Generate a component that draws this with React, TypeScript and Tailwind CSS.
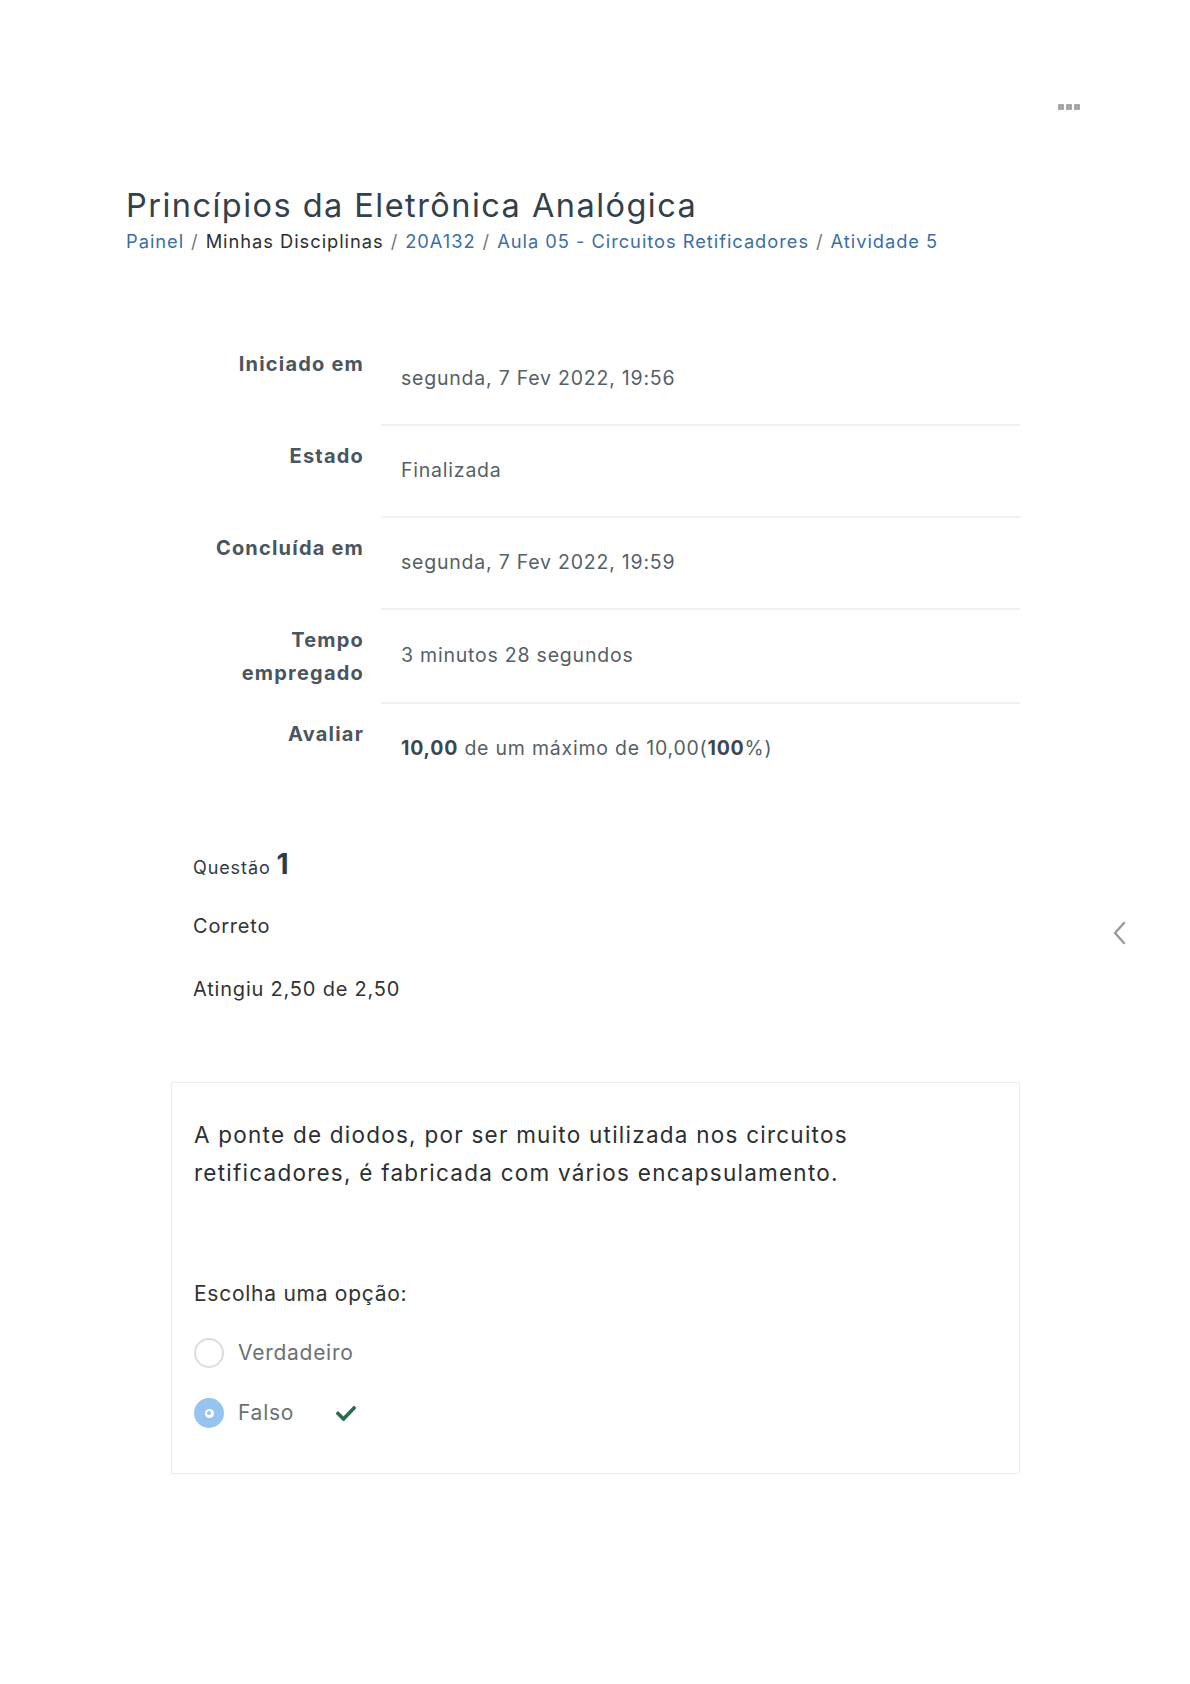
import React from "react";

const font = { fontFamily: "Inter, 'Noto Sans', sans-serif" };

function Row({ label, children, tall }: { label: React.ReactNode; children: React.ReactNode; tall?: boolean }) {
  return (
    <div className="flex">
      <div className={`w-[238px] shrink-0 pr-[17px] text-right text-[20px] font-bold tracking-[0.06em] leading-[33px] text-[#4a5560] ${tall ? "pt-[14px] pb-[12px]" : "pt-[14px]"}`}>
        {label}
      </div>
      <div className="flex-1 flex items-center min-h-[90px] pl-[20px] text-[19.5px] tracking-[0.04em] text-[#555f66]">{children}</div>
    </div>
  );
}

export default function App() {
  return (
    <div className="w-[1190px] min-h-[1684px] bg-white relative" style={font}>
      <div className="flex justify-end pt-[104px] pr-[110px]">
        <div className="flex gap-[2px]">
          <span className="w-[6px] h-[6px] bg-[#a6a6a6] rounded-[1px]" />
          <span className="w-[6px] h-[6px] bg-[#a6a6a6] rounded-[1px]" />
          <span className="w-[6px] h-[6px] bg-[#a6a6a6] rounded-[1px]" />
        </div>
      </div>

      <div className="pl-[126px] pt-[77px]">
        <h1 className="text-[32.5px] tracking-[0.045em] leading-[37px] text-[#32414b] font-normal">Princípios da Eletrônica Analógica</h1>
        <div className="mt-[4px] text-[18.3px] tracking-[0.053em] leading-[26px] text-[#3b6ea5]">
          <span>Painel</span>
          <span className="text-[#777] mx-[7px]">/</span>
          <span className="text-[#2b2f33]">Minhas Disciplinas</span>
          <span className="text-[#777] mx-[7px]">/</span>
          <span>20A132</span>
          <span className="text-[#777] mx-[7px]">/</span>
          <span>Aula 05 - Circuitos Retificadores</span>
          <span className="text-[#777] mx-[7px]">/</span>
          <span>Atividade 5</span>
        </div>
      </div>

      <div className="ml-[143px] w-[877px] mt-[80px]">
        <Row label="Iniciado em">segunda, 7 Fev 2022, 19:56</Row>
        <div className="ml-[238px] border-t-2 border-[#eef1f3]" />
        <Row label="Estado">Finalizada</Row>
        <div className="ml-[238px] border-t-2 border-[#eef1f3]" />
        <Row label="Concluída em">segunda, 7 Fev 2022, 19:59</Row>
        <div className="ml-[238px] border-t-2 border-[#eef1f3]" />
        <Row label={<>Tempo<br />empregado</>} tall>3 minutos 28 segundos</Row>
        <div className="ml-[238px] border-t-2 border-[#eef1f3]" />
        <Row label="Avaliar">
          <span>
            <b className="text-[#3d4750]">10,00</b> de um máximo de 10,00(<b className="text-[#3d4750]">100</b>%)
          </span>
        </Row>
      </div>

      <div className="pl-[193px] mt-[56px] text-[#2f3b44]">
        <div className="flex items-baseline h-[36px]">
          <span className="text-[18px] tracking-[0.05em]">Questão</span>
          <span className="ml-[6px] text-[28px] font-bold leading-none">1</span>
        </div>
        <div className="mt-[26px] text-[20px] tracking-[0.04em] leading-[28px] text-[#333]">Correto</div>
        <div className="mt-[35px] text-[20px] tracking-[0.04em] leading-[28px] text-[#333]">Atingiu 2,50 de 2,50</div>
      </div>

      <div className="absolute left-[1112px] top-[921px]">
        <svg width="16" height="24" viewBox="0 0 16 24" fill="none">
          <path d="M12 2 L3 12 L12 22" stroke="#9a9a9a" strokeWidth="2.4" strokeLinecap="round" strokeLinejoin="round" />
        </svg>
      </div>

      <div className="ml-[171px] w-[849px] mt-[79px] border border-[#eaecef] rounded-[2px] pl-[22px] pt-[33px] pb-[43px]">
        <p className="text-[22.5px] tracking-[0.055em] leading-[38px] text-[#2b2f33]">
          A ponte de diodos, por ser muito utilizada nos circuitos
          <br />
          retificadores, é fabricada com vários encapsulamento.
        </p>
        <div className="mt-[88px] text-[21px] tracking-[0.035em] leading-[28px] text-[#333]">Escolha uma opção:</div>
        <div className="mt-[28px] flex items-center h-[34px]">
          <span className="w-[30px] h-[30px] rounded-full border-2 border-[#dcdcdc] bg-white" />
          <span className="ml-[14px] text-[21px] tracking-[0.035em] text-[#6b7075]">Verdadeiro</span>
        </div>
        <div className="mt-[26px] flex items-center h-[34px]">
          <span className="w-[30px] h-[30px] rounded-full bg-[#95c4f1] flex items-center justify-center">
            <span className="w-[9px] h-[9px] rounded-full bg-white flex items-center justify-center">
              <span className="w-[4px] h-[4px] rounded-full bg-[#95c4f1]" />
            </span>
          </span>
          <span className="ml-[14px] text-[21px] tracking-[0.035em] text-[#6b7075]">Falso</span>
          <svg className="ml-[42px]" width="20" height="16" viewBox="0 0 20 16">
            <path d="M2 8.5 L7.5 14 L18 3" stroke="#2c6b4c" strokeWidth="3.6" fill="none" strokeLinecap="square" />
          </svg>
        </div>
      </div>
    </div>
  );
}
